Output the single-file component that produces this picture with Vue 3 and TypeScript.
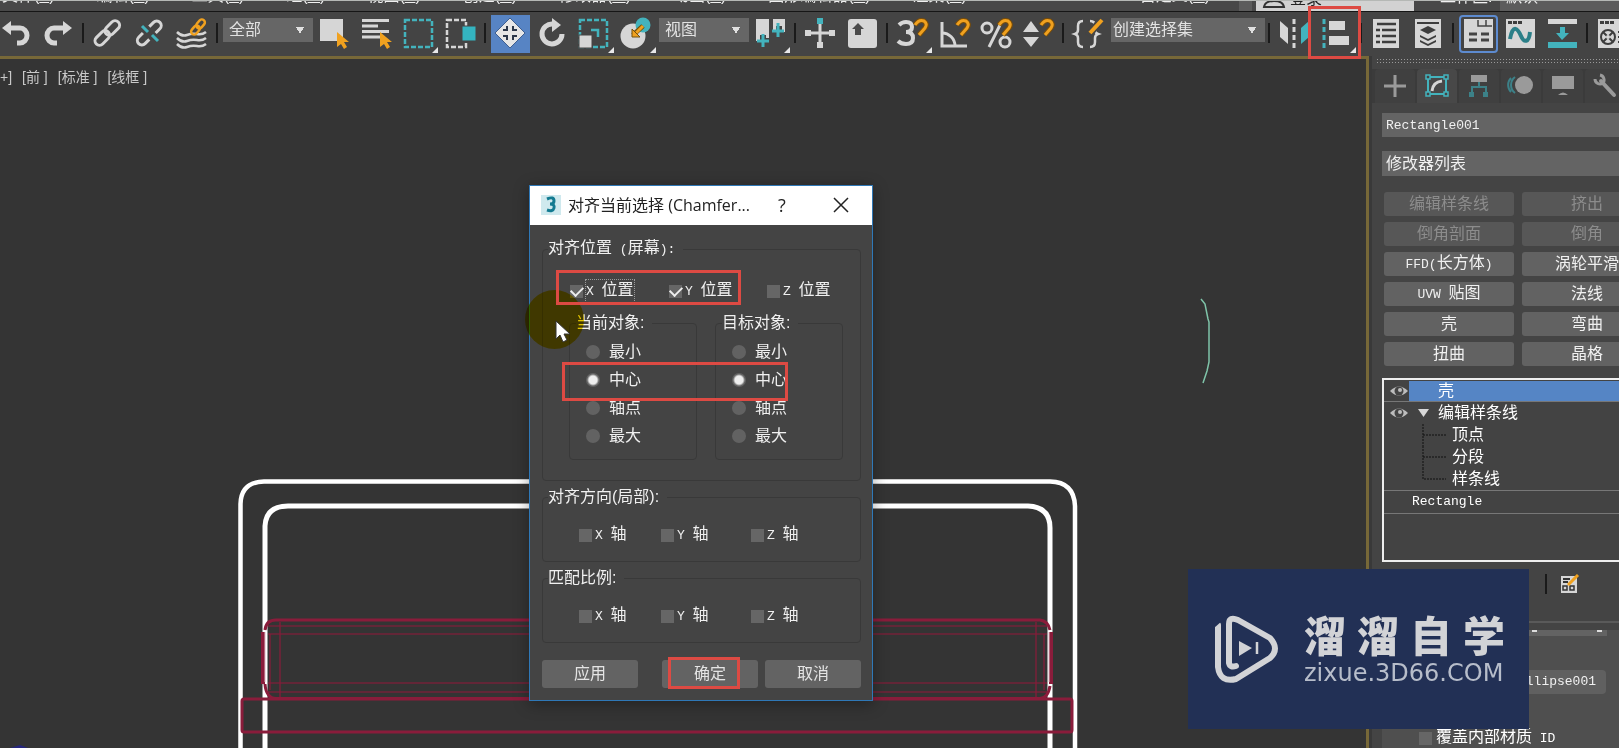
<script setup lang="ts">
import { reactive, ref } from 'vue'

interface Tool {
  kind: 'tool' | 'sep' | 'select'
  name?: string
  art?: string
  flyout?: boolean
  active?: boolean
  options?: string[]
  wide?: boolean
}

const W = '#d6d6d6'
const T = '#43b3bd'
const O = '#f0a11f'

const magnet = `<path d="M3 -8Q7 -14 12 -12Q16 -9 13 -5L7 2" fill="none" stroke="#7a4d08" stroke-width="5"/><path d="M3 -8Q7 -14 12 -12Q16 -9 13 -5L7 2" fill="none" stroke="${O}" stroke-width="3"/>`
const arrowCursor = `<path d="M3 -1v15l4 -3l3 5l3 -2l-3 -5h5z" fill="${O}"/>`

const sep: Tool = { kind: 'sep' }
const tool = (name: string, art: string, extra: Partial<Tool> = {}): Tool => ({ kind: 'tool', name, art, ...extra })

const tools: Tool[] = [
  tool('撤消', `<path d="M-6 -5H4a7 7.500 0 0 1 0 15H1" fill="none" stroke="${W}" stroke-width="5"/><path d="M-14 -5l9 -7v14z" fill="${W}"/>`),
  tool('重做', `<path d="M6 -5H-4a7 7.500 0 0 0 0 15H-1" fill="none" stroke="${W}" stroke-width="5"/><path d="M14 -5l-9 -7v14z" fill="${W}"/>`),
  sep,
  tool('链接', `<g transform="rotate(-45)" fill="none" stroke="${W}" stroke-width="3"><rect x="-16" y="-5" width="17" height="9" rx="4.500"/><rect x="-2" y="-5" width="17" height="9" rx="4.500"/></g>`),
  tool('断开链接', `<g transform="rotate(-45)" fill="none" stroke="${W}" stroke-width="3"><path d="M-5 -5h-6a4.500 4.500 0 0 0 0 9h6M4 -5h6a4.500 4.500 0 0 1 0 9h-6"/></g><path d="M-8 -7l6 6M2 2l6 6" stroke="${T}" stroke-width="3"/>`),
  tool('绑定到空间扭曲', `<path d="M-15 -1q5 5 10 3t10 -1t9 -2M-15 5q5 5 10 3t10 -1t9 -2M-15 11q5 5 10 3t10 -1t9 -2" fill="none" stroke="${W}" stroke-width="2.500"/><g transform="translate(6 -6) rotate(-50)" fill="none" stroke="${O}" stroke-width="2.500"><rect x="-9" y="-3" width="10" height="6" rx="3"/><rect x="-1" y="-3" width="10" height="6" rx="3"/></g>`),
  sep,
  { kind: 'select', name: '选择过滤器', options: ['全部', '几何体', '图形'] },
  tool('选择对象', `<path d="M-14 -14H9V8H-14z" fill="${W}"/>${arrowCursor}`),
  tool('按名称选择', `<path d="M-14 -12.500H13M-14 -7H2M-14 -1.500H13M-14 4H4" stroke="${W}" stroke-width="3"/><g transform="translate(1 0)">${arrowCursor}</g>`),
  tool('矩形选择区域', `<rect x="-13" y="-13" width="27" height="27" fill="none" stroke="${T}" stroke-width="2.500" stroke-dasharray="5 2"/>`, { flyout: true }),
  tool('窗口/交叉', `<rect x="-13" y="-13" width="19" height="27" fill="none" stroke="${W}" stroke-width="2.500" stroke-dasharray="5 2"/><path d="M2 -7H16V8H2z" fill="#34b4c0" stroke="#444" stroke-width="1"/>`),
  sep,
  tool('选择并移动', `<path d="M0 -15L6 -9L9 -6L15 0L9 6L6 9L0 15L-6 9L-9 6L-15 0L-9 -6L-6 -9z" fill="#e6e6e6" stroke="#3f5f90" stroke-width="1"/><path d="M-7 -3h4v-4M7 -3h-4v-4M-7 3h4v4M7 3h-4v4" fill="none" stroke="#2b374a" stroke-width="2"/>`, { active: true }),
  tool('选择并旋转', `<path d="M1 -9a10 10 0 1 0 9 10" fill="none" stroke="${W}" stroke-width="5"/><path d="M0 -15L9 -8L0 -1z" fill="${W}"/>`),
  tool('选择并缩放', `<rect x="-14" y="-13" width="27" height="27" fill="none" stroke="${T}" stroke-width="2.500" stroke-dasharray="5 2"/><path d="M-15 2H-2V15H-15z" fill="${W}" stroke="#444"/><path d="M-3 -3H4V4" fill="none" stroke="${T}" stroke-width="2.500"/>`, { flyout: true }),
  tool('选择并放置', `<circle cx="-3" cy="3" r="12.500" fill="${W}"/><circle cx="7" cy="-8" r="7.500" fill="${T}"/><path d="M7 -7L-3 2" stroke="#72500b" stroke-width="5"/><path d="M7 -7L0 0" stroke="${O}" stroke-width="3"/><path d="M-4 -4V4H4z" fill="${O}" stroke="#72500b" stroke-width="1"/>`, { flyout: true }),
  { kind: 'select', name: '参考坐标系', options: ['视图', '屏幕', '世界'] },
  tool('使用轴点中心', `<path d="M-14 -14H-1V5H-4V2H-10V8H-14zM3 -14H15V-1H12V-7H6V-1H3z" fill="${W}"/><path d="M-7 1V14M-13 8H-1M8 -10V4M2 -2H14" stroke="${T}" stroke-width="3"/>`, { flyout: true }),
  sep,
  tool('选择并操纵', `<path d="M-13 0H13M0 -12V12" stroke="${W}" stroke-width="3"/><path d="M-15 -3h6v6h-6zM9 -3h6v6h-6zM-3 9h6v6h-6z" fill="${W}"/><path d="M-3 -15h6v6h-6z" fill="${T}"/>`),
  tool('键盘快捷键覆盖', `<rect x="-14" y="-14" width="29" height="29" rx="3" fill="${W}"/><path d="M-4 -10L2 -4H-1V2H-7V-4H-10z" fill="#4a4a4a"/>`),
  sep,
  tool('三维捕捉', `<path d="M-13 -8q3 -3 7 -3q6 0 6 5q0 5 -6 5q7 0 7 6q0 6 -7 6q-5 0 -8 -3" fill="none" stroke="${W}" stroke-width="4"/>${magnet}`, { flyout: true }),
  tool('角度捕捉', `<path d="M-12 -11V13H13" fill="none" stroke="${W}" stroke-width="3"/><path d="M-12 0a13 13 0 0 1 13 13" fill="none" stroke="${W}" stroke-width="3"/>${magnet}`),
  tool('百分比捕捉', `<circle cx="-9" cy="-5" r="5" fill="none" stroke="${W}" stroke-width="3"/><circle cx="9" cy="9" r="5" fill="none" stroke="${W}" stroke-width="3"/><path d="M6 -12L-7 14" stroke="${W}" stroke-width="3"/>${magnet}`),
  tool('微调器捕捉', `<path d="M-7 -12L1 -1H-15zM-7 14L-15 4H1z" fill="${W}"/>${magnet}`),
  sep,
  tool('编辑命名选择集', `<path d="M-5 -12q-5 0 -5 5v4q0 3 -3 4q3 1 3 4v4q0 5 5 5M2 -12q5 0 5 5v4q0 3 3 4q-3 1 -3 4v4q0 5 -5 5" fill="none" stroke="${W}" stroke-width="2.500"/><path d="M0 3L13 -13" stroke="#444" stroke-width="7"/><path d="M2 0L14 -13" stroke="${O}" stroke-width="4"/>`),
  { kind: 'select', name: '命名选择集', options: ['创建选择集'], wide: true },
  sep,
  tool('镜像', `<path d="M-14 -12L-6 -5V11L-14 4z" fill="${W}"/><path d="M0 -14V15" stroke="${W}" stroke-width="3" stroke-dasharray="5 3"/><path d="M15 -12L7 -5V11L15 4z" fill="${T}"/>`),
  tool('对齐', `<path d="M-12 -14V15" stroke="${T}" stroke-width="3" stroke-dasharray="5 3"/><path d="M-7 -12H9V-3H-7zM-7 3H13V12H-7z" fill="${W}"/>`, { flyout: true }),
  sep,
  tool('场景资源管理器', `<path d="M-13 -14H13V15H-13z" fill="${W}"/><path d="M-9 -9H10M-4 -3H10M-4 3H10M-4 9H10M-10 -3H-6M-10 3H-6M-10 9H-6" stroke="#3d3d3d" stroke-width="2.500"/>`),
  tool('层资源管理器', `<path d="M-13 -14H13V15H-13z" fill="${W}"/><path d="M-11 -10H11" stroke="#3d3d3d" stroke-width="2"/><path d="M0 -7L8 -3L0 1L-8 -3zM-8 2L0 6L8 2V4L0 8L-8 4zM-8 7L0 11L8 7V9L0 13L-8 9z" fill="#3d3d3d"/>`),
  sep,
  tool('功能区', `<rect x="-18" y="-17" width="37" height="36" rx="3" fill="#444" stroke="#5d8bd0" stroke-width="2"/><path d="M-14 -14H15V15H-14z" fill="${W}"/><path d="M0 -13V-7H14M8 -13V-7" fill="none" stroke="#444" stroke-width="1.500"/><path d="M-9 1H-1M3 1H11M-9 7H-1M3 7H11" stroke="#444" stroke-width="3"/>`),
  tool('曲线编辑器', `<path d="M-14 -14H15V15H-14z" fill="${W}"/><path d="M-12 -10.500H2" stroke="#3d3d3d" stroke-width="3" stroke-dasharray="4 1"/><path d="M-10 6C-7 -10 -2 -4 1 3S9 10 10 -1" fill="none" stroke="#2b7f88" stroke-width="4"/>`),
  tool('图解视图', `<path d="M-14 -14H15V-9H-14z" fill="${W}"/><path d="M-14 9H15V15H-14z" fill="${T}"/><path d="M-2 -6H3V0H7L0 7L-6 0H-2z" fill="${T}"/>`),
  sep,
  tool('材质编辑器', `<path d="M-14 -14H15V15H-14z" fill="${W}"/><path d="M-12 -10.500H2" stroke="#3d3d3d" stroke-width="3" stroke-dasharray="4 1"/><circle cx="-4" cy="4" r="7" fill="none" stroke="#3d3d3d" stroke-width="2"/><path d="M-9 -1L1 9M1 -1L-9 9" stroke="#3d3d3d" stroke-width="2"/><circle cx="-4" cy="4" r="2" fill="${W}"/><path d="M6 -1H15M6 4H15M6 9H15" stroke="#3d3d3d" stroke-width="2"/>`),
]

const menus = [
  ['文件', 'F'], ['编辑', 'E'], ['工具', 'T'], ['组', 'G'], ['视图', 'V'], ['创建', 'C'],
  ['修改器', 'M'], ['动画', 'A'], ['图形编辑器', 'D'], ['渲染', 'R'], ['Civil View', ''], ['自定义', 'U'],
]

const G = '#9a9a9a'
const tabs = [
  { name: '创建', art: `<path d="M0 -11V11M-11 0H11" stroke="${G}" stroke-width="3"/>` },
  { name: '修改', art: `<rect x="-9" y="-9" width="18" height="17" fill="none" stroke="${T}" stroke-width="2"/><path d="M-11 -11h4v4h-4zM7 -11h4v4h-4zM-11 6h4v4h-4zM7 6h4v4h-4z" fill="#444" stroke="${T}" stroke-width="1.500"/><path d="M-5 5q1 -9 10 -10" fill="none" stroke="${W}" stroke-width="3"/>` },
  { name: '层次', art: `<path d="M-8 -11H8V-4H-8z" fill="${G}"/><path d="M0 -4V1M-7 7V1H7V7" fill="none" stroke="#3c8188" stroke-width="2"/><path d="M-10 6h5v5h-5zM4 6h5v5h-5z" fill="#3c8188"/>` },
  { name: '运动', art: `<circle cx="3" cy="-1" r="9" fill="${G}"/><path d="M-6 -9a10 10 0 0 0 0 16M-10 -8a10 10 0 0 0 0 14" fill="none" stroke="#3c8188" stroke-width="2"/>` },
  { name: '显示', art: `<path d="M-11 -10H11V3H-11zM-5 9q5 -5 10 0z" fill="${G}"/>` },
  { name: '实用程序', art: `<path d="M-4 -5L9 9" stroke="${G}" stroke-width="4" stroke-linecap="round"/><path d="M-10 -7a5 5 0 0 0 8 4a5 5 0 0 0 -3 -8" fill="none" stroke="${G}" stroke-width="3"/>` },
]

interface Part { text: string; latin?: boolean }
const modifiers: { parts: Part[]; off?: boolean }[] = [
  { parts: [{ text: '编辑样条线' }], off: true },
  { parts: [{ text: '挤出' }], off: true },
  { parts: [{ text: '倒角剖面' }], off: true },
  { parts: [{ text: '倒角' }], off: true },
  { parts: [{ text: 'FFD(', latin: true }, { text: '长方体' }, { text: ')', latin: true }] },
  { parts: [{ text: '涡轮平滑' }] },
  { parts: [{ text: 'UVW ', latin: true }, { text: '贴图' }] },
  { parts: [{ text: '法线' }] },
  { parts: [{ text: '壳' }] },
  { parts: [{ text: '弯曲' }] },
  { parts: [{ text: '扭曲' }] },
  { parts: [{ text: '晶格' }] },
]

const subObjects = ['顶点', '分段', '样条线']
const objectName = ref('Rectangle001')
const position = reactive([
  { axis: 'X', on: true },
  { axis: 'Y', on: true },
  { axis: 'Z', on: false },
])
const axisGroups = reactive([
  { title: '对齐方向(局部):', axes: [{ axis: 'X', on: false }, { axis: 'Y', on: false }, { axis: 'Z', on: false }] },
  { title: '匹配比例:', axes: [{ axis: 'X', on: false }, { axis: 'Y', on: false }, { axis: 'Z', on: false }] },
])
const anchors = ['最小', '中心', '轴点', '最大']
const objects = reactive([
  { title: '当前对象:', value: '中心' },
  { title: '目标对象:', value: '中心' },
])
const brand = ['溜', '溜', '自', '学']
const overrideId = ref(false)
</script>

<template>
  <div class="app">
    <nav class="menubar">
      <span v-for="m in menus" :key="m[0]" class="menu" :class="{ plain: !m[1] }">{{ m[0] }}<template v-if="m[1]">(<u>{{ m[1] }}</u>)</template></span>
      <span class="nub"></span>
      <span class="login">
        <svg width="24" height="12" viewBox="0 0 24 12"><path d="M2 6q1 -6 10 -6t10 6z" fill="none" stroke="#333" stroke-width="2" /></svg>
        <span>登录</span>
      </span>
      <span class="workspace">工作区:</span>
      <span class="layout">默认</span>
    </nav>

    <div class="toolbar">
      <template v-for="(t, i) in tools" :key="i">
        <span v-if="t.kind === 'sep'" class="sep"></span>
        <select v-else-if="t.kind === 'select'" class="drop" :class="{ wide: t.wide }" :aria-label="t.name">
          <option v-for="o in t.options" :key="o">{{ o }}</option>
        </select>
        <button v-else class="tool" :class="{ active: t.active }" :aria-label="t.name">
          <svg width="42" height="44" viewBox="-21 -21 42 44">
            <g v-html="t.art"></g>
            <path v-if="t.flyout" d="M20 14V20H14z" fill="#e8e8e8" />
          </svg>
        </button>
      </template>
    </div>

    <div class="main">
      <section class="viewport">
        <div class="labels"><span>+]</span><span>[前 ]</span><span>[标准 ]</span><span>[线框 ]</span></div>
        <svg class="scene" width="1366" height="689" viewBox="0 59 1366 689">
          <g fill="none" stroke="#fff">
            <path d="M240.500 760V504Q241 482 264 481.500H1050Q1074 482 1075 506V760" stroke-width="4.500" />
            <path d="M265 760V526Q266 506 288 506H1028Q1050 507 1050 528V760" stroke-width="5" />
          </g>
          <g fill="none" stroke="#8a1c3b">
            <path d="M263 632V684M1051 632V684" stroke-width="4" />
            <path d="M265 632V682M1049 632V682" stroke="#ddb9c3" stroke-width="1" />
            <path d="M265 630Q266 620 276 620H1040Q1048 621 1050 630M265 684Q266 698 276 698.500H1040Q1048 698 1050 686" stroke-width="3" />
            <path d="M270 634V690M280 622V697M1044 634V690M1036 622V697" stroke-width="2" opacity=".6" />
            <path d="M268 626H1047M268 634H1047M268 683H1047M268 692H1047" stroke-width="2" opacity=".55" />
            <rect x="242" y="699" width="830" height="33" rx="2" stroke-width="3" />
          </g>
          <path d="M1201 299L1205 304L1208 319L1209 322V362L1207 371L1203 383" fill="none" stroke="#7fc4a9" stroke-width="1.500" />
          <path d="M10 748L20 745L28 748z" fill="#25257c" />
        </svg>
      </section>

      <aside class="panel">
        <div class="grip"></div>
        <div class="tabs">
          <button v-for="(t, i) in tabs" :key="t.name" class="tab" :class="{ on: i === 1 }" :aria-label="t.name">
            <svg width="40" height="34" viewBox="-20 -17 40 34" v-html="t.art"></svg>
          </button>
        </div>
        <div class="fields">
          <input v-model="objectName" class="name latin" aria-label="对象名称">
          <select class="modlist" aria-label="修改器列表"><option>修改器列表</option></select>
          <div class="mods">
            <button v-for="(m, i) in modifiers" :key="i" class="mod" :disabled="m.off">
              <span v-for="(p, j) in m.parts" :key="j" :class="{ latin: p.latin }">{{ p.text }}</span>
            </button>
          </div>
          <div class="stack">
            <div class="row">
              <svg class="eye" width="25" height="20" viewBox="0 0 25 20"><path d="M6 10Q15 1 24 10Q15 19 6 10z" fill="#bdbdbd" /><circle cx="15" cy="10" r="4.500" fill="#444" /><circle cx="16" cy="9" r="2" fill="#bdbdbd" /></svg>
              <span class="picked">壳</span>
            </div>
            <div class="row">
              <svg class="eye" width="25" height="20" viewBox="0 0 25 20"><path d="M6 10Q15 1 24 10Q15 19 6 10z" fill="#bdbdbd" /><circle cx="15" cy="10" r="4.500" fill="#444" /><circle cx="16" cy="9" r="2" fill="#bdbdbd" /></svg>
              <svg width="29" height="20" viewBox="0 0 29 20"><path d="M9 6H20L14.500 14z" fill="#d8d8d8" /></svg>
              <span>编辑样条线</span>
            </div>
            <div v-for="(s, i) in subObjects" :key="s" class="row sub">
              <svg width="30" height="22" viewBox="0 0 30 22"><path :d="i < 2 ? 'M1 0V22M1 11H24' : 'M1 0V11H24'" fill="none" stroke="#111" stroke-width="1" stroke-dasharray="2 1" /></svg>
              <span>{{ s }}</span>
            </div>
            <div class="row base"><span class="latin">Rectangle</span></div>
          </div>
          <div class="stacktools">
            <span class="sep"></span>
            <button class="config" aria-label="配置修改器集">
              <svg width="20" height="20" viewBox="0 0 20 20"><path d="M1 2H17V19H1z" fill="#d6d6d6" /><path d="M3 5H10M3 8H8" stroke="#333" stroke-width="2" /><path d="M3 12h4v4h-4zM10 12h4v4h-4z" fill="none" stroke="#333" stroke-width="1.500" /><path d="M8 11L18 1" stroke="#f0a11f" stroke-width="3" /></svg>
            </button>
          </div>
        </div>
        <div class="rollout">
          <div class="cut"><i></i><i></i></div>
          <button class="pick latin">Ellipse001</button>
          <label class="override"><input v-model="overrideId" type="checkbox"><span>覆盖内部材质<span class="latin"> ID</span></span></label>
        </div>
      </aside>
    </div>

    <form class="dialog" @submit.prevent>
      <header class="title">
        <svg width="20" height="20" viewBox="0 0 20 20"><rect width="20" height="20" fill="#cfe9ee" /><path d="M6 4Q13 1 13 6Q13 9 9 9Q14 9 13 13Q12 17 6 15" fill="none" stroke="#137a91" stroke-width="3" /></svg>
        <h1>对齐当前选择 (Chamfer...</h1>
        <button type="button" class="help" aria-label="帮助">?</button>
        <button type="button" class="close" aria-label="关闭"><svg width="16" height="16" viewBox="0 0 16 16"><path d="M1 1L15 15M15 1L1 15" stroke="#222" stroke-width="1.500" /></svg></button>
      </header>
      <div class="body">
        <fieldset class="group first">
          <legend>对齐位置<span class="latin"> (</span>屏幕<span class="latin">):</span></legend>
          <div class="checks pos">
            <label v-for="(p, i) in position" :key="p.axis"><input v-model="p.on" type="checkbox"><span :class="{ focus: i === 0 }"><span class="latin">{{ p.axis + ' ' }}</span>位置</span></label>
          </div>
          <div class="pair">
            <fieldset v-for="o in objects" :key="o.title" class="group inner">
              <legend>{{ o.title }}</legend>
              <label v-for="a in anchors" :key="a" class="radio"><input v-model="o.value" type="radio" :name="o.title" :value="a"><span>{{ a }}</span></label>
            </fieldset>
          </div>
        </fieldset>
        <fieldset v-for="g in axisGroups" :key="g.title" class="group axes">
          <legend>{{ g.title }}</legend>
          <div class="checks">
            <label v-for="a in g.axes" :key="a.axis"><input v-model="a.on" type="checkbox"><span><span class="latin">{{ a.axis + ' ' }}</span>轴</span></label>
          </div>
        </fieldset>
        <div class="actions">
          <button type="button">应用</button>
          <button type="submit" class="ok">确定</button>
          <button type="button">取消</button>
        </div>
      </div>
    </form>

    <div class="halo"></div>
    <svg class="pointer" width="16" height="24" viewBox="0 0 16 24"><path d="M1 1V19L5 15L8 22L12 20L9 14H15z" fill="#fff" stroke="#333" stroke-width="1" /></svg>
    <div class="mark m1"></div>
    <div class="mark m2"></div>
    <div class="mark m3"></div>
    <div class="mark m4"></div>

    <div class="watermark">
      <svg width="66" height="68" viewBox="0 0 66 68" fill="none" stroke="#d2d3d6" stroke-width="6" stroke-linecap="round" stroke-linejoin="round">
        <path d="M4 10V52Q6 68 22 64L56 43Q66 34 56 23L24 5Q15 1 15 9V48Q16 53 22 51" />
        <path d="M25 26L38 33L25 41z" fill="#d2d3d6" stroke="none" />
        <path d="M43 27V39" stroke-width="2.500" stroke-linecap="butt" />
        <path d="M0 5V13L8 6V5z" fill="#223055" stroke="none" />
      </svg>
      <div class="words">
        <div class="brand"><span v-for="(b, i) in brand" :key="i">{{ b }}</span></div>
        <div class="site">zixue.3D66.COM</div>
      </div>
    </div>
  </div>
</template>

<style>
html, body { background: #444; }
</style>

<style scoped>
* { box-sizing: border-box; }
.app {
  position: relative;
  height: 100vh;
  overflow: hidden;
  display: flex;
  flex-direction: column;
  background: #444;
  color: #f0f0f0;
  font: 16px/20px "Liberation Sans", "Noto Sans CJK SC", sans-serif;
}
button, input, select { font: inherit; color: inherit; border: 0; padding: 0; margin: 0; background: none; border-radius: 0; }
.latin { font-family: "Liberation Mono", monospace; font-size: 13px; white-space: pre; }

.menubar {
  flex: 0 0 12px;
  display: flex;
  overflow: hidden;
  padding-left: 2px;
  border-top: 1px solid #b5b8b5;
  border-bottom: 1px solid #161616;
  background: #484848;
  white-space: nowrap;
}
.menubar > span { flex: none; }
.menu { margin-top: -15px; margin-right: 42px; line-height: 20px; }
.menu.plain { margin-right: 62px; }
.menubar > .nub { width: 13px; background: #5c5c5c; margin: 0 4px 0 -13px; }
.login { display: flex; width: 158px; background: #d2d2d2; color: #222; padding-left: 6px; gap: 4px; }
.login span { margin-top: -12px; }
.workspace { width: 86px; padding-left: 26px; }
.workspace, .layout { margin-top: -14px; height: 30px; line-height: 20px; }
.menubar > .layout { flex: 1 0 118px; padding-left: 6px; background: #5c5c5c; }

.toolbar { flex: 0 0 44px; display: flex; align-items: flex-start; margin-left: -5px; overflow: hidden; }
.tool { flex: 0 0 42px; height: 44px; display: flex; }
.tool svg { display: block; }
.tool.active { background: linear-gradient(#5784c4, #5784c4) center 3px / 39px 38px no-repeat; }
.sep { flex: 0 0 8px; height: 20px; margin-top: 11px; background: linear-gradient(#1a1a1a, #1a1a1a) center / 2px 100% no-repeat; }
.drop {
  appearance: none;
  flex: 0 0 90px;
  height: 24px;
  margin: 6px 0 0 2px;
  padding: 0 24px 0 6px;
  background: #666;
  background-image: linear-gradient(to bottom right, #e0e0e0 50%, transparent 50%), linear-gradient(to bottom left, #e0e0e0 50%, transparent 50%);
  background-size: 4px 7px;
  background-position: right 9px center, right 13px center;
  background-repeat: no-repeat;
  color: #e2e2e2;
  line-height: 24px;
}
.drop.wide { flex-basis: 154px; padding-left: 2px; }

.main { flex: 1; display: flex; min-height: 0; }
.viewport { flex: 1; position: relative; min-width: 0; overflow: hidden; background: #343434; border: solid #776838; border-width: 3px 3px 0 0; }
.labels { display: flex; gap: 10px; padding-top: 8px; font-size: 14px; color: #c9c9c9; }
.scene { position: absolute; left: 0; top: 0; }

.panel { flex: 0 0 250px; overflow: hidden; display: flex; flex-direction: column; border-left: 3px solid #393939; }
.grip { flex: 0 0 6px; margin: 2px 0 5px 4px; background: radial-gradient(circle, #999 1px, transparent 1px) 0 0 / 3px 3px; }
.tabs { flex: none; display: flex; gap: 2px; padding-left: 3px; background: #3b3b3b; }
.tab { flex: 0 0 40px; height: 34px; background: #404040; border-radius: 4px 4px 0 0; }
.tab.on { background: #484848; }
.tab svg { display: block; }
.fields { flex: none; padding: 10px 0 0 10px; }
.name { display: block; width: 100%; height: 24px; padding-left: 4px; background: #646464; }
.modlist { appearance: none; display: block; width: 100%; height: 25px; margin-top: 14px; padding-left: 4px; background: #646464; }
.mods { display: grid; grid-template-columns: 130px 130px; gap: 6px 8px; margin: 16px 0 12px 2px; }
.mod { height: 24px; border-radius: 3px; background: #626262; line-height: 22px; white-space: nowrap; }
.mod:disabled { background: #575757; color: #8c8c8c; }
.stack { height: 184px; border: 2px solid #eee; border-right: 0; background: #434343; }
.row { display: flex; align-items: center; height: 22px; color: #fff; }
.row:first-child { border-bottom: 1px solid #777; }
.eye { flex: none; }
.picked { flex: 1; padding-left: 29px; background: #5585c5; }
.sub { padding-left: 38px; }
.base { height: 24px; border: solid #777; border-width: 1px 0; padding-left: 28px; }
.stacktools { display: flex; gap: 10px; padding: 1px 0 0 160px; height: 61px; border-bottom: 2px solid #5a5a5a; }
.config { height: 20px; margin-top: 11px; }
.rollout { flex: 1; margin: 7px 0 0 10px; background: #4f4f4f; overflow: hidden; }
.cut { display: flex; justify-content: space-between; width: 225px; height: 6px; padding: 0 5px 0 150px; background: #636363; }
.cut i { width: 5px; height: 2px; background: #ddd; }
.pick { display: block; width: 130px; height: 24px; margin: 34px 0 0 94px; padding-left: 42px; border-radius: 4px; background: #606060; text-align: left; }
.override { display: flex; align-items: center; gap: 4px; margin: 33px 0 0 37px; color: #fff; white-space: nowrap; }

input[type=checkbox], input[type=radio] { appearance: none; flex: none; width: 13px; height: 13px; background: #666; }
input[type=radio] { width: 14px; height: 14px; border-radius: 50%; background: #626262; }
input[type=radio]:checked { background: radial-gradient(circle, #eee 4px, #626262 6px); }
input[type=checkbox]:checked { display: grid; place-items: center; }
input[type=checkbox]:checked::before { content: ""; width: 10px; height: 6px; border: solid #eee; border-width: 0 0 2px 2px; rotate: -45deg; margin-top: -3px; }

.dialog { position: absolute; left: 529px; top: 185px; width: 344px; border: 1px solid #2f78b7; background: #444; box-shadow: 0 3px 14px rgba(0, 0, 0, .35); }
.title { display: flex; align-items: center; height: 39px; padding: 0 12px 2px 11px; background: #fff; color: #222; }
.title svg { flex: none; }
h1 { flex: 1; margin: 0 0 0 7px; font: 16px/24px "Open Sans", "Noto Sans CJK SC", sans-serif; white-space: nowrap; }
.help { width: 30px; margin-right: 27px; font: 18px/24px "Open Sans", sans-serif; }
.close { width: 34px; height: 24px; display: grid; place-items: center; margin-right: 2px; }
.body { padding: 13px 11px 12px 12px; }
.group { min-width: 0; margin: 0 0 6px; padding: 0 0 0 5px; border: 1px solid #393939; border-radius: 4px; }
legend { padding: 0 8px 0 0; line-height: 20px; }
.checks { display: grid; grid-template-columns: 82px 90px auto; padding: 17px 0 15px 31px; }
.checks.pos { grid-template-columns: 99px 98px auto; padding: 20px 0 11px 22px; }
.checks label { display: flex; align-items: center; gap: 3px; }
.focus { outline: 1px dotted #999; }
.pair { display: grid; grid-template-columns: 128px 128px; gap: 18px; padding: 0 0 20px 21px; }
.inner { margin: 0; padding: 5px 0 9px 6px; }
.radio { display: flex; align-items: center; gap: 9px; height: 28px; padding-left: 10px; }
.actions { display: flex; gap: 7px; padding-top: 11px; }
.actions button { width: 96px; height: 28px; border-radius: 3px; background: #636363; color: #e4e4e4; }
.actions .ok { margin-left: auto; }

.halo { position: absolute; left: 525px; top: 290px; width: 59px; height: 59px; border-radius: 50%; background: #f0d000; mix-blend-mode: multiply; }
.pointer { position: absolute; left: 555px; top: 320px; }
.mark { position: absolute; border: 3px solid #dd4a43; pointer-events: none; }
.m1 { left: 1308px; top: 6px; width: 53px; height: 53px; }
.m2 { left: 556px; top: 270px; width: 185px; height: 35px; }
.m3 { left: 562px; top: 362px; width: 226px; height: 39px; }
.m4 { left: 668px; top: 657px; width: 72px; height: 32px; }

.watermark { position: absolute; left: 1188px; top: 569px; width: 341px; height: 160px; display: flex; align-items: center; gap: 24px; padding-left: 26px; background: #223055; color: #d2d3d6; }
.brand { display: flex; gap: 11px; font: 900 42px/44px "Noto Sans CJK SC", sans-serif; }
.site { margin-top: 4px; font: 24px/26px "DejaVu Sans", sans-serif; color: #b7bdca; }
</style>
